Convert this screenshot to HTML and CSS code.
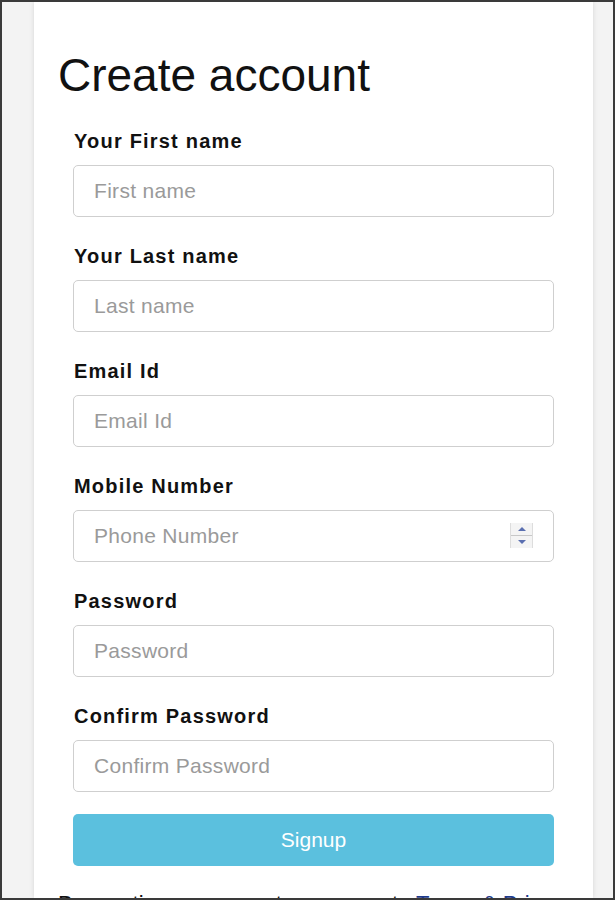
FILE: index.html
```html
<!DOCTYPE html>
<html lang="en">
<head>
<meta charset="utf-8">
<title>Create account</title>
<link rel="stylesheet" href="styles.css">
</head>
<body>
<div class="frame">
  <div class="card">
    <h1 class="title">Create account</h1>
    <form class="form">
      <div class="group">
        <label class="label">Your First name</label>
        <input class="field" type="text" placeholder="First name">
      </div>
      <div class="group">
        <label class="label">Your Last name</label>
        <input class="field" type="text" placeholder="Last name">
      </div>
      <div class="group">
        <label class="label">Email Id</label>
        <input class="field" type="text" placeholder="Email Id">
      </div>
      <div class="group">
        <label class="label">Mobile Number</label>
        <div class="num-wrap">
          <input class="field" type="text" placeholder="Phone Number">
          <span class="spinner">
            <span class="spin-up"></span>
            <span class="spin-down"></span>
          </span>
        </div>
      </div>
      <div class="group">
        <label class="label">Password</label>
        <input class="field" type="password" placeholder="Password">
      </div>
      <div class="group">
        <label class="label">Confirm Password</label>
        <input class="field" type="password" placeholder="Confirm Password">
      </div>
      <button class="btn" type="button">Signup</button>
      <p class="foot">By creating an account you agree to <a href="#" class="link">Terms &amp; Privacy</a></p>
    </form>
  </div>
</div>
</body>
</html>
```
FILE: styles.css
```css
html, body {
  margin: 0;
  padding: 0;
}
body {
  background: #f3f3f3;
  font-family: "Liberation Sans", Arial, sans-serif;
}
.frame {
  box-sizing: border-box;
  height: 900px;
  border: 2px solid #3a3a3a;
  padding: 0 20px 0 32px;
  overflow: hidden;
  background: #f3f3f3;
}
.card {
  background: #fff;
  height: 100%;
  box-shadow: 0 0 5px rgba(0, 0, 0, 0.12);
  padding: 48px 39px 0 24px;
  box-sizing: border-box;
}
.title {
  margin: 0;
  font-size: 46px;
  line-height: 50px;
  font-weight: normal;
  color: #111;
}
.form {
  padding: 31px 0 0 15px;
}
.group {
  display: flex;
  flex-direction: column;
  margin-bottom: 29px;
}
.label {
  font-size: 20px;
  line-height: 22px;
  font-weight: bold;
  color: #111;
  letter-spacing: 1.2px;
  padding-left: 1px;
  margin-top: -1px;
  margin-bottom: 13px;
}
.field {
  box-sizing: border-box;
  width: 100%;
  height: 52px;
  border: 1px solid #cfcfcf;
  border-radius: 5px;
  padding: 0 20px;
  font-family: "Liberation Sans", Arial, sans-serif;
  font-size: 21px;
  color: #333;
  background: #fff;
  outline: none;
}
.field::placeholder {
  color: #9a9a9a;
  letter-spacing: 0.3px;
}
.num-wrap {
  position: relative;
}
.spinner {
  position: absolute;
  right: 21px;
  top: 13px;
  width: 21px;
  height: 25px;
  display: flex;
  flex-direction: column;
  border-left: 1px solid #ddd;
  border-right: 1px solid #ddd;
}
.spin-up, .spin-down {
  flex: 1;
  position: relative;
  background: #f4f4f4;
}
.spin-up {
  border-bottom: 1px solid #c8c8c8;
}
.spin-up::after, .spin-down::after {
  content: "";
  position: absolute;
  left: 50%;
  top: 50%;
  transform: translate(-50%, -50%);
  border-left: 4px solid transparent;
  border-right: 4px solid transparent;
}
.spin-up::after {
  border-bottom: 4px solid #5a6fb0;
}
.spin-down::after {
  border-top: 4px solid #5a6fb0;
}
.btn {
  display: block;
  width: 100%;
  height: 52px;
  margin-top: -7px;
  border: none;
  border-radius: 5px;
  background: #5bc0de;
  color: #fff;
  font-family: "Liberation Sans", Arial, sans-serif;
  font-size: 21px;
  cursor: pointer;
}
.foot {
  margin: 25px 0 0 -15px;
  font-size: 22px;
  color: #111;
  white-space: nowrap;
}
.link {
  color: #1e3a8a;
  text-decoration: none;
}
```
